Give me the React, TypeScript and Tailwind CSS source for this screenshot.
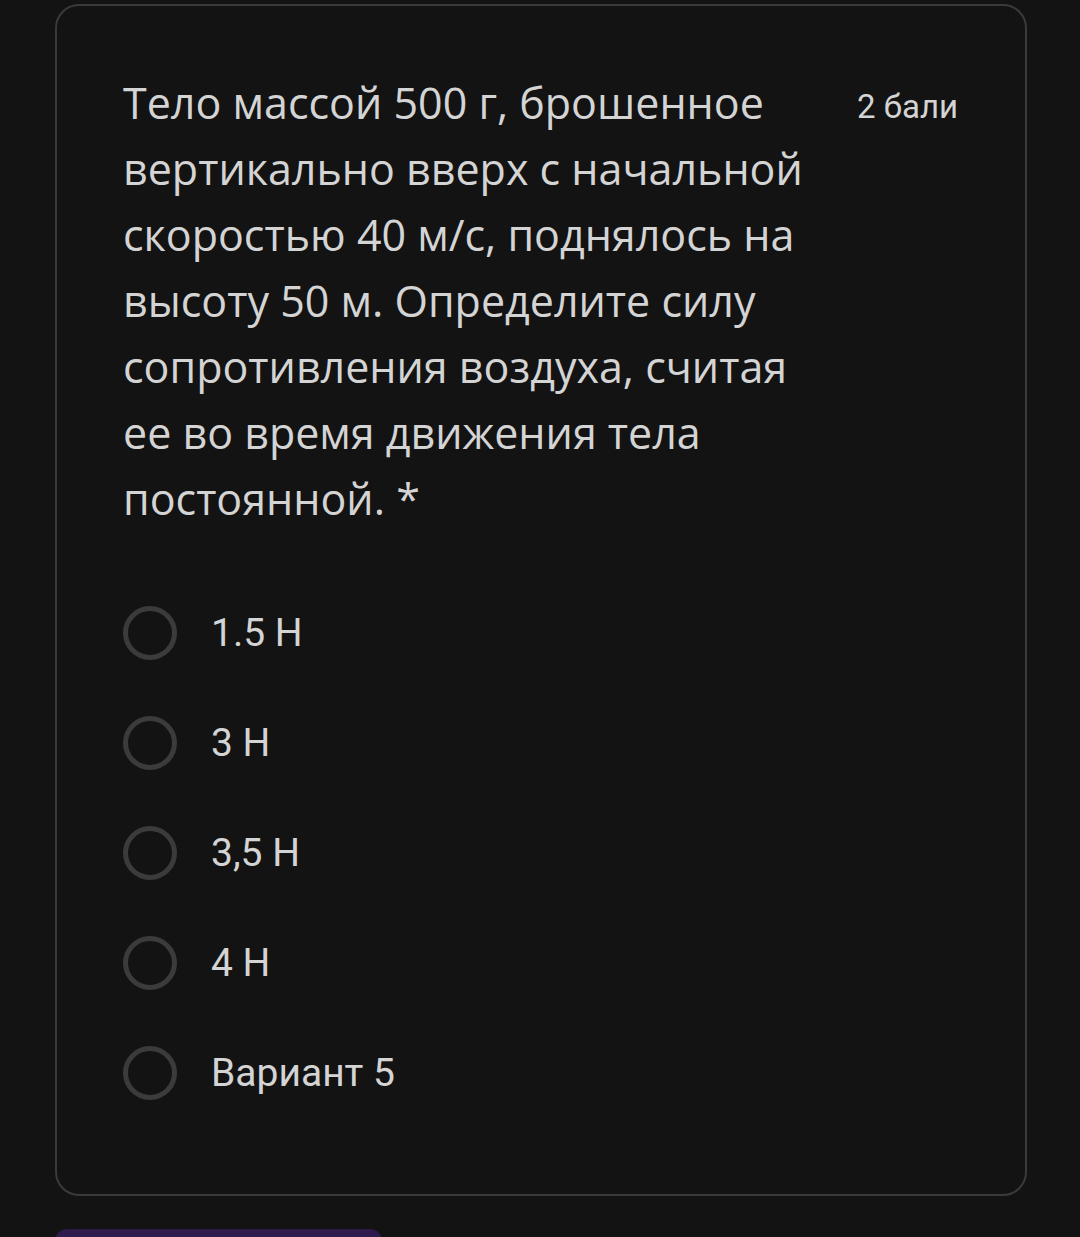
export default function App() {
  const options = ['1.5 Н', '3 Н', '3,5 Н', '4 Н', 'Вариант 5'];

  return (
    <div className="min-h-screen bg-[#131313] pl-[55px] pr-[53px] pt-[4px] overflow-hidden">
      <div className="rounded-[24px] border-2 border-[#3a3a3a] bg-[#131313] pl-[66px] pr-[67px] pt-[64px] pb-[66px]">
        <div className="flex items-start justify-between">
          <p
            className="w-[700px] text-[43px] leading-[66px] text-[#d4d4d4]"
            style={{ fontFamily: '"Open Sans", "Noto Sans", sans-serif' }}
          >
            Тело массой 500 г, брошенное вертикально вверх с начальной скоростью 40 м/с, поднялось на высоту 50 м.
            Определите силу сопротивления воздуха, считая ее во время движения тела постоянной. *
          </p>
          <span
            className="mt-[17px] text-[33px] leading-[40px] text-[#d4d4d4]"
            style={{ fontFamily: 'Roboto, sans-serif' }}
          >
            2 бали
          </span>
        </div>

        <div className="mt-[46px] flex flex-col">
          {options.map((opt) => (
            <div key={opt} className="flex h-[110px] items-center">
              <div className="h-[54px] w-[54px] rounded-full border-[5px] border-[#3b3b3b]" />
              <span
                className="ml-[34px] text-[39px] text-[#d4d4d4]"
                style={{ fontFamily: 'Roboto, sans-serif' }}
              >
                {opt}
              </span>
            </div>
          ))}
        </div>
      </div>

      <div className="mt-[33px] h-[60px] w-[327px] rounded-[12px] bg-[#2d1b4e]" />
    </div>
  );
}
